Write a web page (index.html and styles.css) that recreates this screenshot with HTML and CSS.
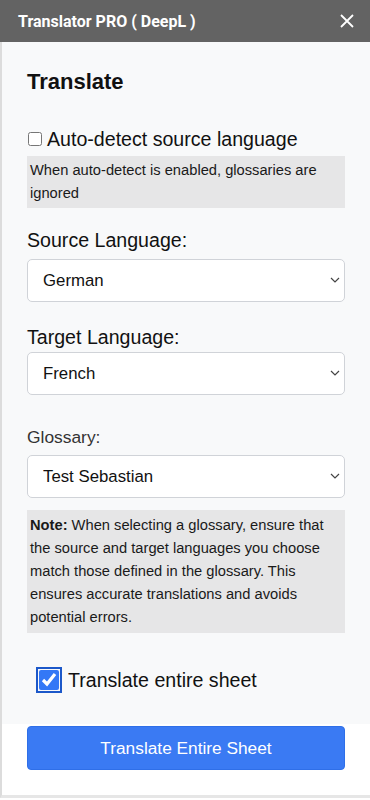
FILE: index.html
```html
<!DOCTYPE html>
<html lang="en">

<head>
    <meta charset="UTF-8">
    <meta name="viewport" content="width=device-width, initial-scale=1.0">
    <title>Translator PRO ( DeepL )</title>
    <link rel="stylesheet" href="styles.css">
</head>

<body>
    <header class="titlebar">
        <span class="title">Translator PRO ( DeepL )</span>
        <svg class="close" width="14" height="14" viewBox="0 0 14 14">
            <path d="M1 1 L13 13 M13 1 L1 13" stroke="#fff" stroke-width="1.8" fill="none" />
        </svg>
    </header>
    <div class="panel">
        <div class="content">
            <h2>Translate</h2>
            <label class="check-row">
                <input type="checkbox" id="autoDetect">
                <span>Auto-detect source language</span>
            </label>
            <p class="note">When auto-detect is enabled, glossaries are ignored</p>

            <label class="field-label" for="source">Source Language:</label>
            <div class="select-wrap">
                <select id="source">
                    <option>German</option>
                    <option>English</option>
                </select>
                <svg class="chevron" width="10" height="6" viewBox="0 0 10 6">
                    <path d="M1 1 L5 5 L9 1" stroke="#444" stroke-width="1.2" fill="none" />
                </svg>
            </div>

            <label class="field-label target" for="target">Target Language:</label>
            <div class="select-wrap near">
                <select id="target">
                    <option>French</option>
                    <option>English</option>
                </select>
                <svg class="chevron" width="10" height="6" viewBox="0 0 10 6">
                    <path d="M1 1 L5 5 L9 1" stroke="#444" stroke-width="1.2" fill="none" />
                </svg>
            </div>

            <label class="field-label small" for="glossary">Glossary:</label>
            <div class="select-wrap">
                <select id="glossary">
                    <option>Test Sebastian</option>
                </select>
                <svg class="chevron" width="10" height="6" viewBox="0 0 10 6">
                    <path d="M1 1 L5 5 L9 1" stroke="#444" stroke-width="1.2" fill="none" />
                </svg>
            </div>

            <p class="note note-big"><b>Note:</b> When selecting a glossary, ensure that the source and target languages you choose match those defined in the glossary. This ensures accurate translations and avoids potential errors.</p>

            <label class="check-row sheet-row">
                <input type="checkbox" id="entireSheet" class="big-check" checked>
                <span>Translate entire sheet</span>
            </label>
        </div>
        <div class="footer">
            <button>Translate Entire Sheet</button>
        </div>
    </div>
</body>

</html>
```

FILE: styles.css
```css
body {
    margin: 0;
    padding: 0;
    background-color: #fff;
    font-family: "Liberation Sans", Arial, sans-serif;
    color: #202124;
}

.titlebar {
    height: 42px;
    background-color: #636363;
    display: flex;
    align-items: center;
    justify-content: space-between;
    padding: 0 16px 0 18px;
}

.titlebar .title {
    font-family: Roboto, sans-serif;
    font-weight: bold;
    font-size: 16px;
    color: #fff;
}

.close {
    display: block;
}

.panel {
    border-left: 2px solid #dcdcdc;
    border-bottom: 3px solid #e6e6e6;
    height: 753px;
    display: flex;
    flex-direction: column;
}

.content {
    background-color: #f8f9fa;
    padding: 27px 25px 33px 25px;
    display: flex;
    flex-direction: column;
}

h2 {
    margin: 0 0 33px 0;
    font-size: 22px;
    line-height: 26px;
    color: #111;
}

.check-row {
    display: flex;
    align-items: center;
    font-size: 19.6px;
    line-height: 22px;
    color: #111;
}

.check-row input {
    margin: 0 5px 0 1px;
    width: 14px;
    height: 14px;
}

.note {
    margin: 6px 0 0 0;
    background-color: #e6e6e7;
    padding: 3px 3px;
    font-size: 14.7px;
    line-height: 23px;
    color: #1a1a1a;
}

.field-label {
    margin-top: 21px;
    font-size: 19.6px;
    line-height: 22px;
    color: #111;
}

.field-label.target {
    margin-top: 24px;
}

.field-label.small {
    margin-top: 32px;
    font-size: 17.4px;
    line-height: 20px;
    color: #333;
}

.select-wrap {
    margin-top: 8px;
    position: relative;
}

.select-wrap.near {
    margin-top: 4px;
}

select {
    display: block;
    width: 100%;
    height: 43px;
    appearance: none;
    border: 1px solid #d0d3d8;
    border-radius: 5px;
    background-color: #fff;
    padding: 0 15px;
    font-family: "Liberation Sans", Arial, sans-serif;
    font-size: 16.8px;
    color: #111;
}

.chevron {
    position: absolute;
    right: 5px;
    top: 18px;
}

.note-big {
    margin-top: 12px;
    padding: 4px 3px 4px 3px;
}

.sheet-row {
    margin-top: 36px;
    padding-left: 10px;
}

.big-check {
    width: 20px !important;
    height: 20px !important;
    margin: 0 9px 0 2px !important;
    accent-color: #3478f6;
    outline: 2px solid #1c58c9;
    outline-offset: 1px;
}

.footer {
    padding: 2px 25px;
}

.footer button {
    width: 100%;
    height: 44px;
    background-color: #3a7af3;
    color: #fff;
    border: 1px solid #2f6fe8;
    border-radius: 4px;
    font-family: "Liberation Sans", Arial, sans-serif;
    font-size: 17.3px;
    cursor: pointer;
}
```
